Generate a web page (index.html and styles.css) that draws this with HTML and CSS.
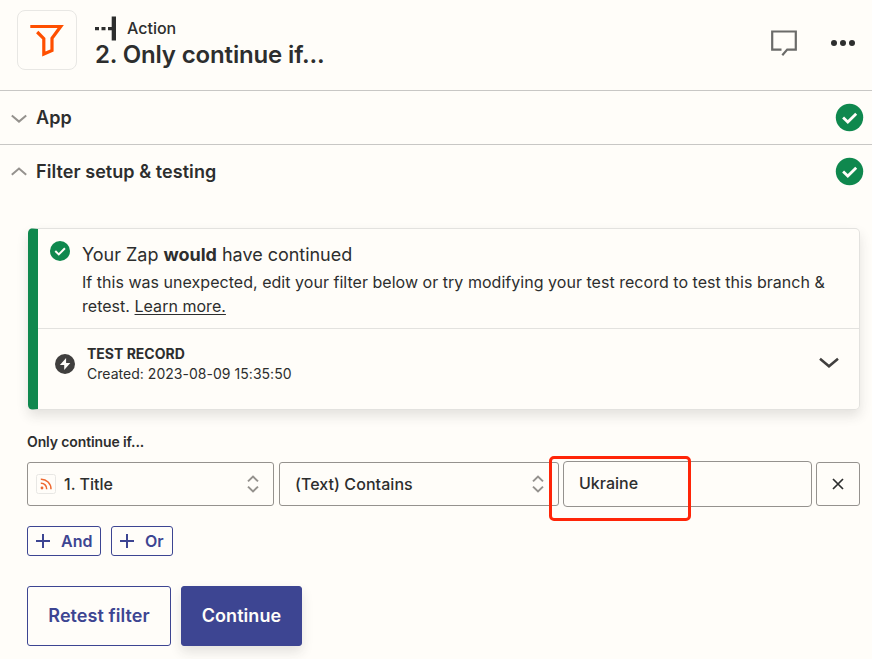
FILE: index.html
```html
<!DOCTYPE html>
<html lang="en">
<head>
<meta charset="utf-8">
<title>Only continue if</title>
<link rel="stylesheet" href="styles.css">
</head>
<body>
<header class="step-header">
  <div class="app-icon">
    <svg width="60" height="60" viewBox="0 0 60 60" fill="none" stroke="#ff4f00" stroke-width="3.2"><path d="M13.3 16.5H43.7L35 28.3V40.4L26.8 44V28.6L20.2 22"/></svg>
  </div>
  <div class="step-title">
    <div class="kind">
      <svg width="22" height="26" viewBox="0 0 22 26" fill="#2d2e2e"><path d="M0 12h4v3.2H0zM6.5 12h4v3.2h-4zM13 12h4v3.2h-4zM16.7 1.5h4.3v24h-4.3z"/></svg>
      <span>Action</span>
    </div>
    <h1>2. Only continue if...</h1>
  </div>
  <div class="header-actions">
    <svg width="28" height="28" viewBox="0 0 28 28" fill="none" stroke="#6b6b69" stroke-width="2.2"><path d="M12.5 20.6H3.2V2.5H26.8V20.6H18.2L13.3 26.2"/></svg>
    <svg width="24" height="8" viewBox="0 0 24 8" fill="#2d2e2e"><circle cx="3" cy="4" r="3"/><circle cx="12" cy="4" r="3"/><circle cx="21" cy="4" r="3"/></svg>
  </div>
</header>
<section class="row">
  <svg class="chev" width="16" height="10" viewBox="0 0 16 10"><path d="M.8 1.4 8 7.6l7.2-6.2"/></svg>
  <h2>App</h2>
  <svg class="ok" width="28" height="28" viewBox="0 0 28 28"><circle cx="13.5" cy="13.5" r="13.7"/><path d="M7.1 13.6 11.8 18 20.2 9.7"/></svg>
</section>
<section class="row row-open">
  <svg class="chev" width="16" height="10" viewBox="0 0 16 10"><path d="M.8 7.8 8 1.6l7.2 6.2"/></svg>
  <h2>Filter setup &amp; testing</h2>
  <svg class="ok" width="28" height="28" viewBox="0 0 28 28"><circle cx="13.5" cy="13.5" r="13.7"/><path d="M7.1 13.6 11.8 18 20.2 9.7"/></svg>
</section>
<main>
  <div class="card">
    <div class="result">
      <svg class="ok-small" width="20" height="20" viewBox="0 0 28 28"><circle cx="14" cy="14" r="14"/><path d="M7.4 14.1 12.3 18.7 20.9 10.2"/></svg>
      <div>
        <p class="lead">Your Zap <b>would</b> have continued</p>
        <p class="detail">If this was unexpected, edit your filter below or try modifying your test record to test this branch &amp;<br>retest. <a>Learn more.</a></p>
      </div>
    </div>
    <div class="record">
      <svg width="20" height="20" viewBox="0 0 20 20"><circle cx="10" cy="10" r="10" fill="#403f3e"/><path d="M11.1 4 4.9 11H9.2V16L15.3 9H11.1z" fill="#fffdf9"/></svg>
      <div class="record-text">
        <b>TEST RECORD</b>
        <span>Created: 2023-08-09 15:35:50</span>
      </div>
      <svg class="expand" width="20" height="12" viewBox="0 0 20 12" fill="none" stroke="#403f3e" stroke-width="2.5"><path d="M1 1.7 10 9.3l9-7.6"/></svg>
    </div>
  </div>
  <div class="label">Only continue if...</div>
  <div class="condition">
    <div class="select field">
      <svg class="rss" width="20" height="20" viewBox="0 0 20 20" fill="none"><rect x=".5" y=".5" width="19" height="19" rx="2" stroke="#e8e7e4"/><g stroke="#ee6a32" stroke-width="1.5"><path d="M4.8 9.3A5.5 5.5 0 0 1 10.7 15.2M4.8 5.2A9.8 9.8 0 0 1 15 15.2"/></g><circle cx="6" cy="14" r="1.4" fill="#ee6a32"/></svg>
      <span>1. Title</span>
      <svg class="sort" width="12" height="18" viewBox="0 0 12 18"><path d="M1 6.4 6 1.6l5 4.8M1 11.6l5 4.8 5-4.8"/></svg>
    </div>
    <div class="select operator">
      <span>(Text) Contains</span>
      <svg class="sort" width="12" height="18" viewBox="0 0 12 18"><path d="M1 6.4 6 1.6l5 4.8M1 11.6l5 4.8 5-4.8"/></svg>
    </div>
    <div class="value">Ukraine</div>
    <button class="remove" aria-label="Remove"><svg width="12" height="12" viewBox="0 0 12 12" fill="none" stroke="#2d2e2e" stroke-width="1.7"><path d="M1 1l10 10M11 1 1 11"/></svg></button>
    <div class="highlight"></div>
  </div>
  <div class="logic">
    <button class="and"><svg width="14" height="14" viewBox="0 0 14 14"><path d="M0 7h14M7 0v14"/></svg><span>And</span></button>
    <button class="or"><svg width="14" height="14" viewBox="0 0 14 14"><path d="M0 7h14M7 0v14"/></svg><span>Or</span></button>
  </div>
  <div class="footer">
    <button class="retest">Retest filter</button>
    <button class="continue">Continue</button>
  </div>
</main>
</body>
</html>
```

FILE: styles.css
```css
* { box-sizing: border-box; }
body {
  margin: 0;
  height: 659px;
  overflow: hidden;
  background: #fffdf9;
  color: #2d2e2e;
  font-family: Inter, "Liberation Sans", sans-serif;
}
h1, h2, p { margin: 0; }
svg { display: block; flex: none; overflow: visible; }
button { font-family: inherit; background: transparent; padding: 0; margin: 0; }

.step-header { display: flex; height: 91px; padding: 10px 17px; border-bottom: 1px solid #c8c7c5; }
.app-icon { width: 60px; height: 60px; border: 1px solid #e8e7e4; border-radius: 8px; }
.app-icon svg { margin: -1px; }
.step-title { margin-left: 18px; padding-top: 5px; }
.kind { display: flex; align-items: center; height: 26px; gap: 10px; font-size: 16px; font-weight: 500; }
h1 { font-size: 24px; line-height: 28px; font-weight: 600; letter-spacing: -.15px; white-space: nowrap; }
.header-actions { display: flex; align-items: center; gap: 34px; height: 66px; margin-left: auto; }

.row { display: flex; align-items: center; height: 54px; padding: 0 8px 0 11px; border-bottom: 1px solid #c8c7c5; }
.row-open { border-bottom-color: transparent; }
.chev { fill: none; stroke: #95928e; stroke-width: 2; margin-top: 3px; }
.row-open .chev { margin-top: 0; }
h2 { margin-left: 9px; font-size: 18px; line-height: 24px; font-weight: 600; letter-spacing: .06px; }
.row .ok { margin-left: auto; }
.ok circle, .ok-small circle { fill: #0f884e; }
.ok path, .ok-small path { fill: none; stroke: #fffdf9; stroke-width: 2.8; }

main { padding: 29px 12px 0 27px; }
.card {
  height: 182px;
  margin-left: 1px;
  border: 1px solid #e3e2df;
  border-left: 10px solid #0f884e;
  border-radius: 5px;
  box-shadow: 0 6px 12px rgba(45, 46, 46, .13);
}
.result { display: flex; height: 100px; padding: 12px 0 0 12px; border-bottom: 1px solid #e3e2df; }
.result > div { margin-left: 12px; white-space: nowrap; }
.lead { font-size: 18px; line-height: 28px; letter-spacing: -.02px; }
.detail { padding-top: 1px; font-size: 16px; line-height: 24px; letter-spacing: .03px; }
.detail a { text-decoration: underline; text-underline-offset: 2px; }
.record { display: flex; align-items: center; height: 69px; padding: 0 20px 0 17px; }
.record-text { display: flex; flex-direction: column; margin: 0 auto 0 12px; font-size: 14px; line-height: 20px; }
.record-text span { letter-spacing: .03px; }
.expand { margin-top: -2px; }

.label { margin-top: 22px; font-size: 14px; line-height: 20px; font-weight: 600; letter-spacing: -.12px; }
.condition { position: relative; display: flex; align-items: center; height: 46px; margin-top: 9px; font-size: 16px; font-weight: 500; }
.select { display: flex; align-items: center; height: 44px; border: 1px solid #95928e; border-radius: 3px; }
.field { width: 247px; padding: 0 14px 0 8px; }
.field span { margin-left: 8px; }
.operator { width: 280px; margin-left: 5px; padding: 0 14px 0 15px; letter-spacing: .06px; }
.sort { margin-left: auto; fill: none; stroke: #95928e; stroke-width: 2; }
.value { width: 249px; height: 46px; margin-left: 4px; padding-left: 15px; line-height: 43px; border: 1px solid #95928e; border-radius: 4px; }
.remove { display: flex; align-items: center; justify-content: center; width: 44px; height: 44px; margin-left: 4px; border: 1px solid #95928e; border-radius: 3px; }
.highlight { position: absolute; left: 522px; top: -5px; width: 142px; height: 65px; border: 3px solid #ff2508; border-radius: 5px; }

.logic { display: flex; gap: 10px; margin-top: 19px; }
.logic button { display: flex; align-items: center; height: 30px; padding-left: 8px; border: 1px solid #3d4592; border-radius: 3px; color: #3d4592; font-size: 16px; font-weight: 600; }
.logic svg { fill: none; stroke: #3d4592; stroke-width: 2; }
.logic span { margin-left: 11px; }
.and { width: 74px; }
.or { width: 62px; }

.footer { display: flex; gap: 10px; margin-top: 30px; }
.footer button { height: 60px; padding-bottom: 2px; border: 1px solid #3d4592; border-radius: 3px; font-size: 18px; font-weight: 600; letter-spacing: .06px; }
.retest { width: 144px; color: #3d4592; }
.footer .continue { width: 121px; background: #3d4592; color: #fffdf9; box-shadow: 0 6px 12px rgba(45, 46, 46, .13); }
```
